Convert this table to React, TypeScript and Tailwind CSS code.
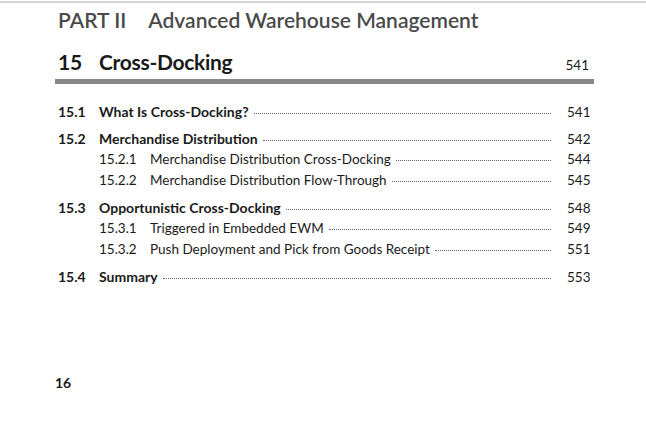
import React from "react";

interface TocEntry {
  num: string;
  title: string;
  page: string;
  level: 1 | 2;
  gap?: boolean;
}

const ENTRIES: TocEntry[] = [
  { num: "15.1", title: "What Is Cross-Docking?", page: "541", level: 1 },
  { num: "15.2", title: "Merchandise Distribution", page: "542", level: 1, gap: true },
  { num: "15.2.1", title: "Merchandise Distribution Cross-Docking", page: "544", level: 2 },
  { num: "15.2.2", title: "Merchandise Distribution Flow-Through", page: "545", level: 2 },
  { num: "15.3", title: "Opportunistic Cross-Docking", page: "548", level: 1, gap: true },
  { num: "15.3.1", title: "Triggered in Embedded EWM", page: "549", level: 2 },
  { num: "15.3.2", title: "Push Deployment and Pick from Goods Receipt", page: "551", level: 2 },
  { num: "15.4", title: "Summary", page: "553", level: 1, gap: true },
];

function TocRow({ entry }: { entry: TocEntry }) {
  const main = entry.level === 1;
  return (
    <div className={`flex items-baseline h-[21px] leading-[21px] ${entry.gap ? "mt-[6px]" : ""}`}>
      {main ? (
        <span className="w-[41px] shrink-0 font-bold text-[14px]">{entry.num}</span>
      ) : (
        <span className="ml-[41px] w-[51px] shrink-0 text-[13.5px]">{entry.num}</span>
      )}
      <span className={`shrink-0 ${main ? "font-bold text-[14px]" : "text-[13.5px]"}`}>{entry.title}</span>
      <span className="flex-1 ml-[5px] mr-[16px] border-b border-dotted border-[#666] translate-y-[-3px]" />
      <span className="w-[22px] shrink-0 text-right text-[13.5px]">{entry.page}</span>
    </div>
  );
}

export default function App() {
  return (
    <div className="w-[646px] h-[426px] bg-white overflow-hidden text-[#1a1a1a] font-['Lato',sans-serif]">
      <div className="h-[2px] mt-[1px] bg-[#d4d4d4]" />

      <div className="pl-[58px] pt-[5px] text-[21px] leading-[24px] font-semibold text-[#4a4a4a]">
        <span>PART II</span>
        <span className="ml-[22px]">Advanced Warehouse Management</span>
      </div>

      <div className="ml-[55px] w-[539px] mt-[18px]">
        <div className="flex items-baseline pl-[3px] pr-[5px] h-[29px] leading-[24px]">
          <span className="w-[41px] shrink-0 text-[21px] font-bold tracking-[-0.3px]">15</span>
          <span className="text-[21px] font-bold tracking-[-0.3px]">Cross-Docking</span>
          <span className="ml-auto text-[13.5px]">541</span>
        </div>
        <div className="h-[5px] bg-[#888888]" />

        <div className="pl-[3px] pr-[5px] mt-[17px]">
          {ENTRIES.map((e) => (
            <TocRow key={e.num} entry={e} />
          ))}
        </div>
      </div>

      <div className="ml-[55px] mt-[85px] text-[14px] leading-[21px] font-bold">16</div>
    </div>
  );
}
